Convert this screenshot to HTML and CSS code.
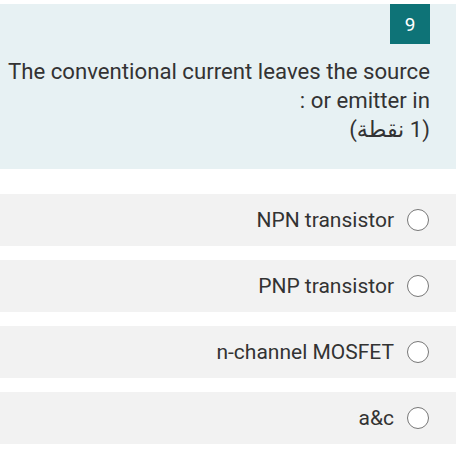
FILE: index.html
```
<!DOCTYPE html>
<html lang="ar" dir="rtl">
<head>
<meta charset="utf-8">
<link rel="stylesheet" href="styles.css">
</head>
<body>
<div class="page">
  <section class="question">
    <div class="badge">9</div>
    <div class="qtext">
      <div>The conventional current leaves the source</div>
      <div>or emitter in :</div>
      <div class="points">(1 نقطة)</div>
    </div>
  </section>
  <ul class="options">
    <li class="option"><span class="radio"></span><span class="label">NPN transistor</span></li>
    <li class="option"><span class="radio"></span><span class="label">PNP transistor</span></li>
    <li class="option"><span class="radio"></span><span class="label">n-channel MOSFET</span></li>
    <li class="option"><span class="radio"></span><span class="label">a&amp;c</span></li>
  </ul>
</div>
</body>
</html>
```
FILE: styles.css
```
html, body {
  margin: 0;
  padding: 0;
  background: #ffffff;
}
body {
  font-family: Roboto, "Noto Sans", Arial, sans-serif;
  color: #333333;
}
.page {
  width: 456px;
  padding-top: 4px;
}
.question {
  background: #e7f1f3;
  height: 165px;
  padding-right: 26px;
  display: flex;
  flex-direction: column;
  align-items: flex-start;
}
.badge {
  width: 40px;
  height: 40px;
  background: #0e7377;
  color: #ffffff;
  font-size: 19px;
  display: flex;
  align-items: center;
  justify-content: center;
}
.qtext {
  margin-top: 13px;
  text-align: right;
  font-size: 22.2px;
  line-height: 29px;
  white-space: nowrap;
}
.points {
  font-family: Roboto, "Noto Sans", "DejaVu Sans", sans-serif;
}
.options {
  list-style: none;
  margin: 25px 0 0 0;
  padding: 0;
  display: flex;
  flex-direction: column;
  gap: 14px;
}
.option {
  background: #f2f2f2;
  height: 52px;
  display: flex;
  align-items: center;
  justify-content: flex-start;
  padding-right: 27px;
  gap: 13px;
  font-size: 21px;
}
.radio {
  width: 20px;
  height: 20px;
  border: 1.6px solid #777777;
  border-radius: 50%;
  background: #ffffff;
}
```
